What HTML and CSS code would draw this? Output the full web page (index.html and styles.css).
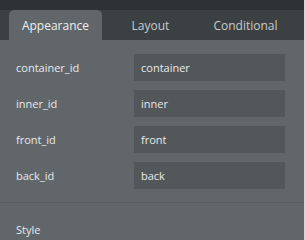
FILE: index.html
```html
<!DOCTYPE html>
<html lang="en">
<head>
    <meta charset="UTF-8">
    <title>Element properties</title>
    <link rel="stylesheet" href="styles.css">
</head>
<body>
    <div class="editor">
        <div class="topstrip"></div>
        <div class="tabs">
            <div class="tab active">Appearance</div>
            <div class="tab">Layout</div>
            <div class="tab">Conditional</div>
        </div>
        <div class="panel">
            <div class="fields">
                <div class="row">
                    <label>container_id</label>
                    <div class="input">container</div>
                </div>
                <div class="row">
                    <label>inner_id</label>
                    <div class="input">inner</div>
                </div>
                <div class="row">
                    <label>front_id</label>
                    <div class="input">front</div>
                </div>
                <div class="row">
                    <label>back_id</label>
                    <div class="input">back</div>
                </div>
            </div>
            <div class="section">Style</div>
        </div>
    </div>
</body>
</html>
```
FILE: styles.css
```css
body {
    margin: 0;
    background-color: #d4d6d7;
    font-family: "Open Sans", "Noto Sans", sans-serif;
    color: #e8eaea;
}
.editor {
    width: 304px;
    height: 240px;
    background-color: #60666a;
    overflow: hidden;
}
.topstrip {
    height: 10px;
    background-color: #2e3235;
}
.tabs {
    display: flex;
    gap: 2px;
    height: 30px;
    padding-left: 9px;
    background-color: #3b4043;
}
.tab {
    width: 93px;
    display: flex;
    align-items: center;
    justify-content: center;
    font-size: 12px;
    color: #c9cccd;
    border-radius: 5px 5px 0 0;
}
.tab.active {
    background-color: #60666a;
    color: #eef0f0;
}
.fields {
    display: flex;
    flex-direction: column;
    gap: 9px;
    padding: 14px 0 0 16px;
}
.row {
    display: flex;
    align-items: center;
    height: 27px;
}
.row label {
    width: 118px;
    font-size: 11px;
}
.input {
    width: 144px;
    height: 27px;
    padding-left: 7px;
    display: flex;
    align-items: center;
    font-size: 11px;
    background-color: #525759;
}
.section {
    margin-top: 13px;
    border-top: 1px solid #575c60;
    padding: 19px 0 0 16px;
    font-size: 11px;
}
```
